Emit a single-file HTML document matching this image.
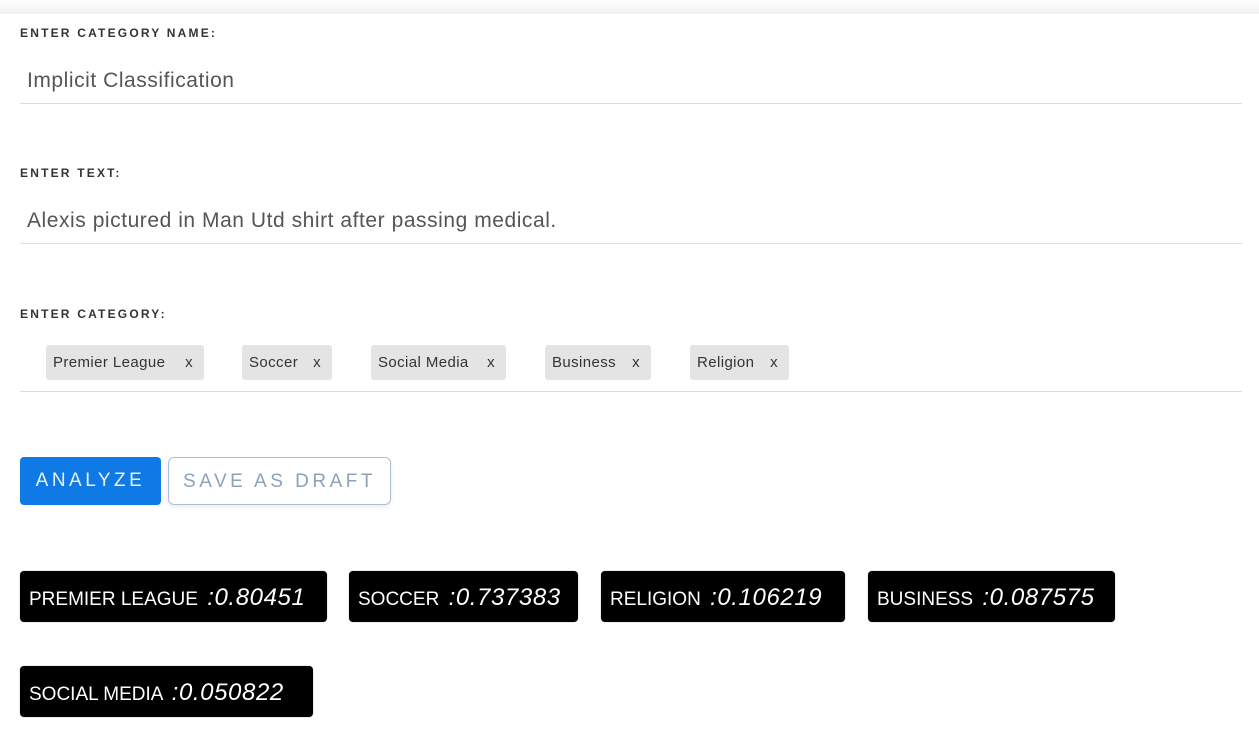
<!DOCTYPE html>
<html><head><meta charset="utf-8"><style>
*{margin:0;padding:0;box-sizing:border-box}
body{width:1259px;height:732px;background:#fff;position:relative;overflow:hidden;font-family:"Liberation Sans",sans-serif}
.a{position:absolute;white-space:nowrap}
.top{position:absolute;left:0;top:0;width:1259px;height:14px;background:linear-gradient(#fff,#f1f1f1);}
.lbl{font-size:12px;font-weight:bold;letter-spacing:2.2px;color:#333}
.val{font-size:21px;color:#555;letter-spacing:0.55px}
.line{position:absolute;left:20px;width:1222px;height:1px;background:#ddd}
.chip{position:absolute;top:345px;height:35px;background:#e4e4e4;border-radius:3px;font-size:15px;color:#333;line-height:35px;padding-left:7px;letter-spacing:0.4px}
.chip span{position:absolute;right:11px}
.btn{position:absolute;top:457px;height:48px;border-radius:4px;font-size:19px;letter-spacing:3.5px;line-height:48px;text-align:center}
.res{position:absolute;height:51px;background:#000;border-radius:4px;color:#fff;font-size:19px;line-height:53px;padding-left:9px;box-shadow:0 0 1px #888}
.res i{font-size:24px;margin-left:4px;letter-spacing:0.6px}
</style></head><body>
<div class="top"></div>
<div class="a lbl" style="left:20px;top:26px">ENTER CATEGORY NAME:</div>
<div class="a val" style="left:27px;top:69px">Implicit Classification</div>
<div class="line" style="top:103px"></div>
<div class="a lbl" style="left:20px;top:166px">ENTER TEXT:</div>
<div class="a val" style="left:27px;top:209px">Alexis pictured in Man Utd shirt after passing medical.</div>
<div class="line" style="top:243px"></div>
<div class="a lbl" style="left:20px;top:307px">ENTER CATEGORY:</div>
<div class="chip" style="left:46px;width:158px">Premier League<span>x</span></div>
<div class="chip" style="left:242px;width:90px">Soccer<span>x</span></div>
<div class="chip" style="left:371px;width:135px">Social Media<span>x</span></div>
<div class="chip" style="left:545px;width:106px">Business<span>x</span></div>
<div class="chip" style="left:690px;width:99px">Religion<span>x</span></div>
<div class="line" style="top:391px"></div>
<div class="btn" style="left:20px;width:141px;background:#0f7ae5;color:#e8f0fa">ANALYZE</div>
<div class="btn" style="left:168px;width:223px;border:1px solid #a9bfd6;border-radius:6px;color:#8da2b8;box-shadow:0 2px 6px rgba(0,0,0,.08)">SAVE AS DRAFT</div>
<div class="res" style="left:20px;top:571px;width:307px">PREMIER LEAGUE <i>:0.80451</i></div>
<div class="res" style="left:349px;top:571px;width:229px">SOCCER <i>:0.737383</i></div>
<div class="res" style="left:601px;top:571px;width:244px">RELIGION <i>:0.106219</i></div>
<div class="res" style="left:868px;top:571px;width:247px">BUSINESS <i>:0.087575</i></div>
<div class="res" style="left:20px;top:666px;width:293px">SOCIAL MEDIA <i>:0.050822</i></div>
</body></html>
